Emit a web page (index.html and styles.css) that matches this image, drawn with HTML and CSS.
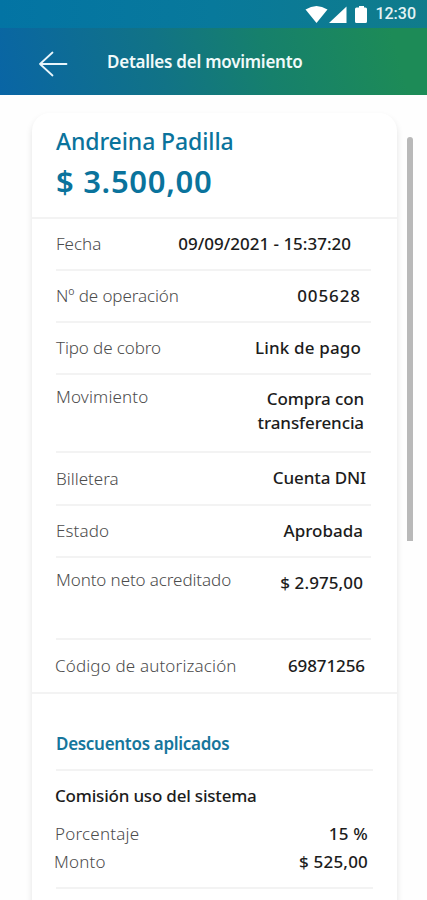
FILE: index.html
```html
<!DOCTYPE html>
<html lang="es">
<head>
    <meta charset="UTF-8">
    <meta name="viewport" content="width=device-width, initial-scale=1.0">
    <title>Detalles del movimiento</title>
    <link rel="stylesheet" href="styles.css">
</head>
<body>
    <div class="status-bar">
        <svg class="status-icons" width="64" height="20" viewBox="0 0 64 20">
            <path d="M0.5 4.5 Q11.5 -2.5 22.5 4.5 L11.5 18 Z"/>
            <path d="M41.5 1.5 V18 H24 Z"/>
            <path d="M51.5 2.5 H54 V1 H59 V2.5 H60.5 Q62 2.5 62 4 V16.5 Q62 18 60.5 18 H51.5 Q50 18 50 16.5 V4 Q50 2.5 51.5 2.5 Z"/>
        </svg>
        <span class="clock">12:30</span>
    </div>

    <header class="header">
        <svg class="back" width="30" height="28" viewBox="0 0 30 28">
            <path d="M28.5 14 H2 M14.5 2.5 L2 14 L14.5 25.5"/>
        </svg>
        <h1>Detalles del movimiento</h1>
    </header>

    <main class="main">
        <div class="card">
            <div class="summary">
                <h2>Andreina Padilla</h2>
                <p class="amount">$ 3.500,00</p>
            </div>

            <div class="rows">
                <div class="row fecha"><span>Fecha</span><b>09/09/2021 - 15:37:20</b></div>
                <div class="row operacion"><span>Nº de operación</span><b>005628</b></div>
                <div class="row cobro"><span>Tipo de cobro</span><b>Link de pago</b></div>
                <div class="row movimiento"><span>Movimiento</span><b>Compra con<br>transferencia</b></div>
                <div class="row billetera"><span>Billetera</span><b>Cuenta DNI</b></div>
                <div class="row estado"><span>Estado</span><b>Aprobada</b></div>
                <div class="row neto"><span>Monto neto acreditado</span><b>$ 2.975,00</b></div>
                <div class="row codigo"><span>Código de autorización</span><b>69871256</b></div>
            </div>

            <div class="discounts">
                <h3>Descuentos aplicados</h3>
                <h4>Comisión uso del sistema</h4>
                <div class="line porcentaje"><span>Porcentaje</span><b>15 %</b></div>
                <div class="line monto"><span>Monto</span><b>$ 525,00</b></div>
                <div class="divider"></div>
            </div>
        </div>
        <div class="scrollbar"></div>
    </main>
</body>
</html>
```
FILE: styles.css
```css
* {
    box-sizing: border-box;
}

body {
    margin: 0;
    height: 900px;
    overflow: hidden;
    background-color: #fefefe;
    font-family: "Noto Sans", sans-serif;
    font-size: 17px;
    line-height: 24px;
    color: #1c1c1c;
}

h1, h2, h3, h4, p {
    margin: 0;
}

.status-bar {
    height: 28px;
    padding: 0 11px 0 0;
    display: flex;
    justify-content: flex-end;
    background: linear-gradient(90deg, #0374a4, #08799b 50%, #107c8b);
}

.status-icons {
    margin: 5px 6px 0 0;
    fill: #fff;
}

.clock {
    font-family: Roboto, sans-serif;
    font-size: 16px;
    font-weight: 500;
    line-height: 28px;
    color: #e3f2f4;
}

.header {
    height: 67px;
    padding-left: 38px;
    display: flex;
    background: linear-gradient(75deg, #0965a5, #117386 38%, #16806c 62%, #1d8b57 92%);
}

.back {
    margin: 22px 39px 0 0;
    fill: none;
    stroke: #e8f5fb;
    stroke-width: 1.8;
    stroke-linecap: round;
    stroke-linejoin: round;
}

.header h1 {
    margin-top: 22px;
    font-size: 17px;
    font-weight: 600;
    letter-spacing: -0.25px;
    color: #f0fafa;
}

.main {
    position: relative;
    padding: 18px 30px 0 32px;
}

.card {
    height: 820px;
    border-radius: 18px;
    background-color: #fff;
    box-shadow: 0 4px 7px rgba(0, 0, 0, 0.11);
}

.summary {
    height: 106px;
    padding: 12px 24px 0;
    border-bottom: 2px solid #f3f3f3;
    color: #0a739c;
}

.summary h2 {
    font-size: 23px;
    font-weight: 500;
    line-height: 32px;
    letter-spacing: -0.1px;
}

.amount {
    font-size: 31px;
    font-weight: 600;
    line-height: 48px;
    letter-spacing: 0.7px;
}

.rows {
    padding: 0 26px 0 24px;
    border-bottom: 2px solid #f3f3f3;
}

.row {
    display: flex;
    justify-content: space-between;
    height: 52px;
    padding-top: 12px;
    border-bottom: 2px solid #f3f3f3;
}

.row span, .line span {
    font-weight: 300;
    color: #4c4c4c;
}

.row b, .line b {
    font-weight: 500;
    text-align: right;
}

.fecha {
    padding: 13px 20px 0 0;
}

.operacion {
    padding-top: 13px;
    padding-right: 10px;
}

.operacion span {
    letter-spacing: -0.1px;
}

.operacion b {
    letter-spacing: 0.9px;
}

.cobro {
    padding-top: 13px;
    padding-right: 10px;
}

.cobro span {
    letter-spacing: -0.1px;
}

.cobro b {
    letter-spacing: 0.15px;
}

.movimiento {
    height: 78px;
    padding: 10px 7px 0 0;
}

.movimiento span {
    letter-spacing: 0.15px;
}

.movimiento b {
    padding-top: 2px;
    letter-spacing: -0.1px;
}

.billetera {
    height: 53px;
    padding: 14px 5px 0 0;
}

.billetera b {
    margin-top: -1px;
    letter-spacing: -0.1px;
}

.estado {
    padding: 13px 8px 0 0;
}

.estado span {
    letter-spacing: 0.1px;
}

.neto {
    height: 82px;
    padding: 10px 8px 0 0;
}

.neto span {
    letter-spacing: -0.1px;
}

.neto b {
    padding-top: 3px;
    letter-spacing: 0.1px;
}

.codigo {
    padding: 14px 6px 0 0;
    border-bottom: none;
}

.codigo span {
    margin-left: -1px;
    letter-spacing: 0.15px;
}

.codigo b {
    letter-spacing: -0.1px;
}

.discounts {
    padding: 38px 24px 0;
}

.discounts h3 {
    height: 39px;
    border-bottom: 2px solid #f3f3f3;
    font-size: 17px;
    font-weight: 600;
    letter-spacing: -0.3px;
    color: #16769c;
}

.discounts h4 {
    margin: 13px 0 14px -1px;
    font-size: 17px;
    font-weight: 500;
    letter-spacing: -0.2px;
}

.line {
    display: flex;
    justify-content: space-between;
    height: 28px;
    padding-right: 5px;
    letter-spacing: 0.2px;
}

.line span {
    margin-left: -1px;
}

.monto span {
    margin-left: -2px;
}

.divider {
    height: 2px;
    margin-top: 9px;
    background-color: #f3f3f3;
}

.scrollbar {
    position: absolute;
    top: 42px;
    right: 14px;
    width: 6px;
    height: 404px;
    border-radius: 3px 3px 0 0;
    background-color: #b9b9b9;
}
```
